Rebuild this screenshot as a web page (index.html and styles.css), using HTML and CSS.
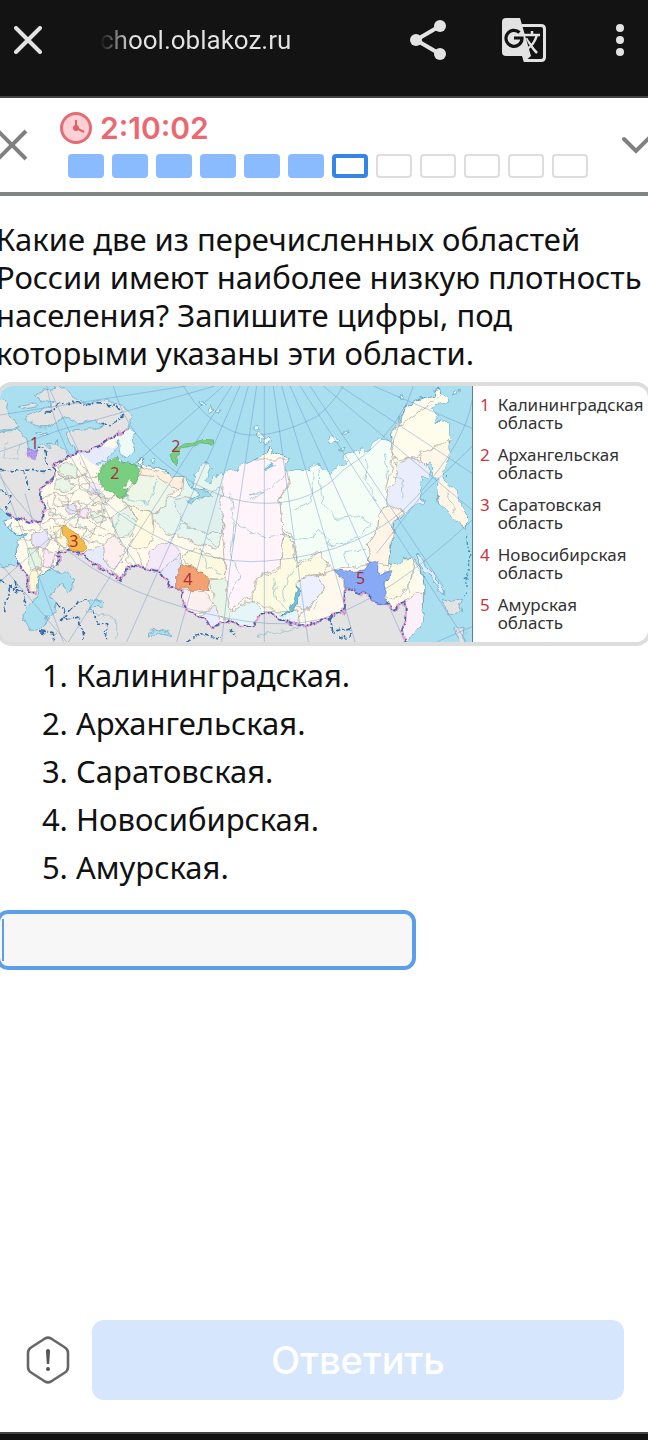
FILE: index.html
```
<!DOCTYPE html>
<html lang="ru">
<head>
  <meta charset="utf-8">
  <meta name="viewport" content="width=device-width, initial-scale=1">
  <title>school.oblakoz.ru</title>
  <link rel="stylesheet" href="styles.css">
</head>
<body>

  <header class="browser-bar">
    <button class="icon-btn" aria-label="Закрыть вкладку">
      <svg width="28" height="28" viewBox="0 0 28 28"><path d="M2 2L26 26M26 2L2 26" stroke="#e3e3e3" stroke-width="4" stroke-linecap="round"/></svg>
    </button>
    <span class="url">chool.oblakoz.ru</span>
    <button class="icon-btn share" aria-label="Поделиться">
      <svg width="36" height="40" viewBox="0 0 36 40"><path d="M30 6L6 20L30 34" fill="none" stroke="#e3e3e3" stroke-width="4"/><g fill="#e3e3e3"><circle cx="30" cy="6" r="6"/><circle cx="6" cy="20" r="6"/><circle cx="30" cy="34" r="6"/></g></svg>
    </button>
    <button class="icon-btn translate" aria-label="Перевести">
      <svg width="44" height="44" viewBox="0 0 44 44">
        <path d="M20 7.500H39Q42.500 7.500 42.500 11V39Q42.500 42.500 39 42.500H23L21 36" fill="none" stroke="#e3e3e3" stroke-width="3"/>
        <path d="M4 0H18L29 38H4Q0 38 0 34V4Q0 0 4 0Z" fill="#e3e3e3"/>
        <path d="M21 38H29L22 44Z" fill="#e3e3e3"/>
        <path d="M17.500 14.500A8 8 0 1 0 20 20H12" fill="none" stroke="#131313" stroke-width="3.200"/>
        <path d="M22 17H38M30 13V17M35 17Q32 27 25 31M25 20Q29 29 35 35" fill="none" stroke="#e3e3e3" stroke-width="2.500"/>
        <path d="M25 19H32Q31 23 29 25Q26 22 25 19Z" fill="#131313"/>
      </svg>
    </button>
    <button class="icon-btn" aria-label="Меню">
      <svg width="8" height="32" viewBox="0 0 8 32" fill="#e3e3e3"><circle cx="4" cy="4" r="4"/><circle cx="4" cy="16" r="4"/><circle cx="4" cy="28" r="4"/></svg>
    </button>
  </header>

  <div class="test-bar">
    <button class="icon-btn" aria-label="Выйти из теста">
      <svg width="28" height="32" viewBox="0 0 28 32"><path d="M-2 2L26 30M26 2L-2 30" stroke="#808080" stroke-width="4"/></svg>
    </button>
    <div class="progress">
      <div class="timer">
        <svg width="32" height="32" viewBox="0 0 32 32"><circle cx="16" cy="16" r="14.500" fill="#fcd0d4" stroke="#e56b74" stroke-width="3"/><path d="M16 8V16L24 20" fill="none" stroke="#e0606b" stroke-width="2"/><circle cx="16" cy="16" r="3" fill="#e0606b"/></svg>
        <span>2:10:02</span>
      </div>
      <div class="steps">
        <i class="step done"></i><i class="step done"></i><i class="step done"></i><i class="step done"></i><i class="step done"></i><i class="step done"></i><i class="step current"></i><i class="step"></i><i class="step"></i><i class="step"></i><i class="step"></i><i class="step"></i>
      </div>
    </div>
    <button class="icon-btn" aria-label="Развернуть">
      <svg width="26" height="20" viewBox="0 0 26 20"><path d="M2 4L14 16L28 2" fill="none" stroke="#808080" stroke-width="4" stroke-linecap="round"/></svg>
    </button>
  </div>

  <main class="task">
    <p class="question" id="question">Какие две из перечисленных областей<br>России имеют наиболее низкую плотность<br>населения? Запишите цифры, под<br>которыми указаны эти области.</p>

    <figure class="map-card">
      <svg class="map" viewBox="0 18 1416 768" preserveAspectRatio="none" role="img" aria-label="Карта России">
        <defs>
          <path id="russia" d="M205 228L235 215 262 212 300 195 345 170 385 145 396 160 402 190 398 220 380 232 362 222 357 200 358 178 345 185 350 205 335 225 310 240 285 250 296 258 318 240 335 240 350 230 370 246 385 242 400 252 414 262 424 264 412 245 420 232 434 238 428 250 440 260 470 262 500 275 515 290 550 290 560 300 574 332 582 300 586 280 600 262 615 255 622 250 630 262 625 280 615 300 630 310 642 285 652 298 660 275 668 290 680 272 715 270 722 258 765 240 785 230 805 205 818 216 840 225 865 235 855 260 865 275 880 270 930 270 935 255 960 258 972 268 985 285 1000 265 1035 255 1040 240 1030 225 1065 210 1075 225 1085 205 1095 220 1120 190 1140 178 1170 185 1180 150 1200 130 1200 110 1215 85 1250 60 1300 45 1302 28 1322 25 1325 42 1345 55 1330 70 1310 72 1295 90 1310 105 1310 125 1350 130 1352 180 1345 200 1352 225 1330 260 1320 275 1330 300 1350 320 1380 350 1385 380 1402 410 1402 445 1380 430 1345 395 1315 370 1312 330 1315 300 1300 280 1295 245 1280 250 1290 275 1288 300 1265 290 1260 320 1265 350 1270 365 1230 380 1210 400 1185 425 1180 470 1170 520 1165 548 1190 545 1200 555 1210 535 1235 535 1260 560 1272 610 1270 680 1260 740 1235 768 1215 780 1205 750 1215 735 1218 665 1180 690 1160 670 1115 660 1070 628 1035 635 1030 700 980 715 925 740 870 730 810 700 780 705 760 735 725 738 690 722 635 738 600 710 560 690 540 625 510 620 480 575 400 555 360 600 320 575 280 555 255 520 205 512 175 520 175 555 145 570 115 590 108 635 85 635 82 590 50 550 48 480 84 462 50 460 20 440 10 424 34 416 24 400 90 430 125 425 130 380 120 330 160 290 160 260Z"/>
          <clipPath id="land"><use href="#russia"/></clipPath>
          <!-- makes coasts and region borders uneven -->
          <filter id="rough" filterUnits="userSpaceOnUse" x="-20" y="0" width="1460" height="810" color-interpolation-filters="sRGB">
            <feTurbulence type="fractalNoise" baseFrequency=".035" numOctaves="2" seed="4"/>
            <feDisplacementMap in="SourceGraphic" scale="24" xChannelSelector="R" yChannelSelector="G"/>
          </filter>
        </defs>
        <rect y="18" width="1416" height="768" fill="#aadff0"/>

        <g filter="url(#rough)">
        <!-- neighbouring countries -->
        <g fill="#e3e3e3" stroke="#5aa0c0" stroke-width="2">
          <path d="M-20 50L15 68 22 95 45 122 60 140 -20 155Z"/>
          <path d="M-20 165L20 150 50 148 78 172 88 215 100 220 120 205 108 190 130 195 150 205 145 190 175 195 200 215 205 232 160 290 120 335 130 380 125 430 90 432 20 400 -20 370Z"/>
          <path d="M110 45L135 30 190 20 222 55 260 70 320 60 370 80 396 112 385 150 330 180 290 200 240 215 215 200 200 160 225 148 270 150 310 138 285 122 230 125 200 112 140 140 110 140 82 120 75 105 130 90 160 65 120 60Z"/>
          <path d="M55 78L100 68 108 80 70 88Z"/>
          <path d="M-20 560L50 560 90 500 260 500 500 560 1190 600 1218 700 1216 808 -20 808Z"/>
          <path d="M1330 658L1350 665 1388 655 1380 680 1385 698 1358 705 1340 698Z"/>
          <path d="M1365 745L1392 742 1398 806 1385 806Z"/>
        </g>
        <g fill="#aadff0" stroke="#5aa0c0" stroke-width="2">
          <path d="M115 590L145 570 205 578 222 600 218 630 200 638 190 615 165 625 150 650 168 670 165 695 145 705 130 740 110 755 88 745 72 715 75 680 105 660 115 630Z"/>
          <path d="M260 670L290 658 312 662 308 680 290 670 270 690Z"/>
          <path d="M445 765L460 742 520 765 515 770 465 755 450 775Z"/>
        </g>

        <use href="#russia" fill="#fefbec" stroke="#5aa0c0" stroke-width="3"/>
        <g clip-path="url(#land)" stroke="#a79f98" stroke-width="2" stroke-linejoin="round">
          <path fill="#e6ebfb" stroke="none" d="M210 200H360V235L290 260 260 235Z"/>
          <path fill="#eefaf6" stroke="none" d="M355 140H405V240H355Z"/>
          <path fill="#eef6e8" d="M420 280L470 275 548 322 500 350 505 375 460 400 420 390 380 380 360 350 385 340Z"/>
          <path fill="#fdf0dc" d="M415 264L550 290 548 325 520 325 470 290 420 285Z"/>
          <path fill="#e6f5ee" d="M550 270L690 240 672 300 665 390 675 450 650 505 590 490 500 460 462 430 460 400 500 380 502 355 545 340Z"/>
          <path fill="#dff1ef" d="M555 350L600 360 668 320 668 460 620 460 555 430 525 380 530 355Z"/>
          <path fill="#fefadf" d="M380 380L420 390 455 400 462 480 410 510 385 500 400 460 375 440Z"/>
          <path fill="#e7f5e9" d="M335 415L380 380 420 420 385 470 350 475Z"/>
          <path fill="#fcefed" d="M310 495L345 465 380 510 355 525 365 550 340 565 315 550Z"/>
          <path fill="#e5ebfb" d="M255 515L310 495 315 550 360 600 300 580Z"/>
          <path fill="#f3e9f8" d="M445 510L510 485 545 520 500 560 475 580 440 560Z"/>
          <path fill="#e9e8fa" d="M500 560L545 520 545 580 530 620 500 620 475 585Z"/>
          <path fill="#fdf9df" d="M555 530L580 500 670 540 675 600 630 595 560 550Z"/>
          <path fill="#e8f5e6" d="M630 600L675 595 710 640 690 720 650 700 640 660Z"/>
          <path fill="#fbf0ef" d="M545 630L610 635 640 670 620 695 560 700Z"/>
          <path fill="#e9edfd" d="M600 705L650 680 665 740 620 745Z"/>
          <path fill="#fef4fa" d="M672 240H870V300L840 360 845 440 850 460 840 560 770 590 750 650 690 690 675 600 670 500 675 440 662 380Z"/>
          <path fill="#f5fef6" d="M862 265L1170 160 1180 235 1160 330 1165 375 1135 400 1130 450 1105 490 1110 550 1000 570 950 515 895 550 880 480 845 440 840 360 870 310Z"/>
          <path fill="#fdfae2" d="M850 460L880 490 890 560 960 515 985 560 970 580 900 600 890 670 870 710 750 660 775 590 840 570 842 520Z"/>
          <path fill="#e6f6f8" d="M690 700L750 660 800 700 890 690 900 730 860 760 690 760Z"/>
          <path fill="#edf0fe" d="M895 600L955 585 975 620 950 660 910 690 890 680Z"/>
          <path fill="#fef9ec" d="M955 585L1000 570 1030 600 1040 640 1030 720 900 740 895 705 950 660 975 625Z"/>
          <path fill="#fef5e6" d="M1135 400L1175 370 1215 385 1180 430 1165 560 1110 550 1105 490 1130 450Z"/>
          <path fill="#e9edfc" d="M1185 250L1230 235 1255 235 1290 265 1290 300 1270 370 1215 400 1165 375 1160 340 1195 290Z"/>
          <path fill="#fefceb" d="M1170 160L1360 15 1360 180 1300 210 1250 230 1190 240 1175 210 1185 185Z"/>
          <path fill="#fef7e7" d="M1255 215L1300 205 1345 180 1410 450 1320 390 1300 280 1280 260Z"/>
          <path fill="#fbfae3" d="M1165 585L1180 540 1240 535 1230 620 1180 660 1150 640Z"/>
          <path fill="#fef0fa" d="M1218 665L1250 640 1270 640 1270 780 1200 780Z"/>
          <!-- central regions -->
          <path fill="#e5f5e6" d="M170 260L210 245 235 270 230 290 180 285Z"/>
          <path fill="#e9f5e9" d="M165 300L205 290 225 320 200 335 165 325Z"/>
          <path fill="#fdf2df" d="M270 340L315 350 325 375 280 370Z"/>
          <path fill="#e6e6fb" d="M190 375L225 370 235 395 205 400Z"/>
          <path fill="#f8e6f4" d="M235 385L275 390 265 415 230 410Z"/>
          <path fill="#e9e5fa" d="M95 465L140 450 150 480 130 510 95 495Z"/>
          <path fill="#fde9f5" d="M125 510L170 515 160 565 130 560Z"/>
          <path fill="#e4f5e4" d="M80 510L110 500 125 560 95 575Z"/>
          <path fill="#fef8d6" d="M165 440L190 435 205 500 175 515Z"/>
          <path fill="#fbeaf6" d="M270 305L310 315 300 340 265 335Z"/>
          <path fill="#e6f5e7" d="M275 400L310 390 320 420 290 430Z"/>
          <path fill="#fef7d6" d="M88 590L120 565 112 635 90 635Z"/>
          <path fill="none" d="M160 265L195 300 240 285 290 290M240 285L235 330 275 330 300 355 340 350M125 350L165 340 200 345 235 330M165 340L160 375 195 380 235 365 260 375 300 378 340 350M130 390L165 385 160 420 200 420 230 405 270 415 300 400 335 415M130 425L160 420 185 445M125 430L110 460 50 440M140 355L150 410 185 400 190 430M200 345L205 385 240 395M235 365L240 400 230 435 265 455 300 440 335 455M210 435L260 440 250 480 310 490M260 375L265 415 290 440 270 475M175 350L185 370 210 360 220 335M300 378L310 410 300 440M150 480L180 470 185 440M50 480L95 480M150 440L160 480 200 510M265 455L300 470 345 465M240 320L270 305 250 270 240 240M335 350L360 345 385 380M410 510L430 560M385 500L380 540 410 555"/>
        </g>

        <!-- rivers -->
        <g fill="none" stroke="#87bccb" stroke-width="2">
          <path d="M190 290L240 320 300 335 330 360M150 400L230 420 270 460 240 500M340 440L370 400 410 425 395 450 355 480M400 290L380 350 440 370 460 340 470 300M515 480L540 430 600 450 650 500M600 500L620 560 660 580M520 540L560 560 610 590M690 340L700 420 720 440 790 470 860 465M790 340L750 345 800 330 860 280M750 360L790 340M700 430L690 520 720 590 690 650M960 270L965 370 1010 415 1080 410 1110 430 1080 470 1000 500 960 450 920 480 850 470M880 390L930 365 940 280M1040 560L1035 515 1100 505M1100 230L1095 300 1130 360M1150 220L1165 300M1180 290L1210 300 1205 355M820 590L830 660 860 690M880 570L850 620 855 670M940 690L960 660M1340 330L1365 400M1240 560L1225 640M260 690L350 720 350 780M770 770L900 740M20 190L10 235 50 245 60 190"/>
        </g>
        <path d="M575 325L625 330 635 350 605 352 575 372 562 366 600 345Z" fill="#9fdbe9" stroke="#5aa0c0" stroke-width="2"/>
        <path d="M845 705L870 690 885 650 896 615 900 640 890 675 865 702Z" fill="#72c1d4" stroke="#408fa8" stroke-width="2"/>
        <path d="M790 265L820 248 828 258 800 270Z" fill="#7cc5dc"/>

        <!-- islands -->
        <g fill="#f5fbf2" stroke="#4a9fc0" stroke-width="2">
          <path d="M755 145L775 135 782 148 765 155ZM768 165L780 158 795 172 785 182ZM795 180L810 170 818 185 800 195ZM980 185L1000 165 1020 178 995 195ZM1025 160L1045 155 1048 163 1030 166ZM1015 210L1035 205 1030 215ZM1200 45L1210 40 1212 60 1203 62ZM455 240L468 235 470 248 460 250ZM597 68L610 65 612 80 600 78ZM625 75L645 90 632 98ZM650 95L662 90 660 102 652 103ZM1362 35L1378 28 1375 40 1364 48Z"/>
          <path fill="#e3eafa" d="M1245 522L1260 525 1290 570 1305 585 1312 610 1330 628 1330 640 1315 630 1290 590 1262 555Z"/>
          <path fill="#e3e3e3" d="M110 155L130 158 140 152 142 160 120 165ZM165 190L172 178 175 195ZM20 440L35 430 35 450Z"/>
        </g>
        <path d="M1395 590Q1410 620 1390 645M1398 470Q1414 530 1400 600M1336 290L1342 278" fill="none" stroke="#4494b6" stroke-width="4" stroke-dasharray="8 6"/>
        </g>

        <!-- meridians and parallels -->
        <g fill="none" stroke="#668fc4" stroke-opacity=".65" stroke-width="2">
          <path d="M720 18L380 786M695 18L205 786M670 18L0 605M645 18L180 150 0 215M560 18L0 105M745 18L530 786M770 18L690 560 665 786M793 18V786M820 18L925 786M845 18L1065 786M870 18L1215 786M900 18L1400 786M930 18L1330 620M970 18L1416 390M1020 18L1416 280M1120 18L1416 145M1240 18L1170 210M1416 200L1270 340 1130 520M150 30L360 480 410 555M0 550L200 786M75 340L100 430M0 280L190 786M1310 786L1416 740"/>
          <path d="M550 18Q610 120 700 155T950 110Q1000 70 1030 18M340 18Q380 170 520 270T800 370 1030 270Q1160 190 1220 70M140 18Q190 300 400 430T800 543Q1100 520 1250 350T1416 60M0 290Q180 560 480 660T950 720 1350 480 1416 360"/>
        </g>

        <g filter="url(#rough)">
        <!-- state border -->
        <g fill="none" stroke-linejoin="round">
          <g stroke="#ef9fd4" stroke-width="8">
            <path id="border-w" d="M20 400L90 430 125 425 130 380 120 330 160 290 160 260 205 228 235 215 262 212 300 195 345 170 385 145"/>
            <path id="border-s" d="M50 545L82 590 85 635 108 635M175 555L175 520 205 512 255 520 280 555 320 575 360 600 385 562 400 555 480 575 510 620 540 625 560 690 600 710 635 738 690 722 725 738 760 735 780 705 810 700 870 730 925 740 980 715 1030 700 1035 635 1070 628 1115 660 1160 670 1180 690 1218 665 1215 735 1205 750 1215 786"/>
          </g>
          <g stroke="#2e6ea6" stroke-width="5" stroke-dasharray="14 6 5 6">
            <path d="M20 400L90 430 125 425 130 380 120 330 160 290 160 260 205 228 235 215 262 212 300 195 345 170 385 145"/>
            <path d="M50 545L82 590 85 635 108 635M175 555L175 520 205 512 255 520 280 555 320 575 360 600 385 562 400 555 480 575 510 620 540 625 560 690 600 710 635 738 690 722 725 738 760 735 780 705 810 700 870 730 925 740 980 715 1030 700 1035 635 1070 628 1115 660 1160 670 1180 690 1218 665 1215 735 1205 750 1215 786"/>
            <path d="M0 268L75 270 150 275M75 270L85 330M110 205L130 205 145 255M140 95L190 70 280 70 345 75 370 110 330 130 300 135M0 330L30 350 20 400M0 600L70 640 70 680M30 620L10 690M45 600L55 650M185 720L215 690 235 660 265 660M165 670L190 680 200 720 240 710 250 786M280 690L290 730 320 735 320 786M120 755L160 765 170 786M560 786L600 760 630 770 665 775M990 710L1000 760 1050 740 1050 768 1010 775M690 745L710 770"/>
          </g>
        </g>

        <!-- numbered regions -->
        <g stroke="#5f9d6a" stroke-width="2">
          <path fill="#79cf80" d="M290 282L310 265 320 240 335 245 350 230 352 245 382 245 405 252 418 290 410 308 395 312 385 290 375 310 370 330 383 330 380 345 350 353 338 332 315 325 295 305Z"/>
          <path fill="#79cf80" d="M510 222L540 200 560 187 605 178 642 180 640 192 595 192 548 205 535 218 528 235 530 252 515 243Z"/>
        </g>
        <path fill="#f6ba4b" stroke="#a98543" stroke-width="2" d="M185 440L200 435 215 455 238 465 258 500 250 512 210 514 205 480 188 460Z"/>
        <path fill="#f3a072" stroke="#aa725a" stroke-width="2" d="M545 555L580 565 595 580 612 580 630 602 625 632 595 628 580 635 560 625 530 625 530 575Z"/>
        <path fill="#88aaf6" stroke="#5b78bb" stroke-width="2" d="M1003 570L1060 575 1090 570 1105 552 1132 545 1130 570 1145 580 1175 572 1155 610 1155 650 1165 672 1120 662 1070 625 1040 630 1035 600Z"/>
        <path fill="#b398f0" stroke="#9470d0" stroke-width="2" d="M82 205L95 212 112 215 100 240 88 235Z"/>
        </g>
        <g class="map-num">
          <text x="90" y="208">1</text>
          <text x="331" y="297">2</text>
          <text x="514" y="217">2</text>
          <text x="208" y="500">3</text>
          <text x="550" y="614">4</text>
          <text x="1068" y="612">5</text>
        </g>
      </svg>
      <figcaption class="legend">
        <div class="legend-row"><b>1</b><span>Калининградская<br>область</span></div>
        <div class="legend-row"><b>2</b><span>Архангельская<br>область</span></div>
        <div class="legend-row"><b>3</b><span>Саратовская<br>область</span></div>
        <div class="legend-row"><b>4</b><span>Новосибирская<br>область</span></div>
        <div class="legend-row"><b>5</b><span>Амурская<br>область</span></div>
      </figcaption>
    </figure>

    <ol class="options">
      <li>Калининградская.</li>
      <li>Архангельская.</li>
      <li>Саратовская.</li>
      <li>Новосибирская.</li>
      <li>Амурская.</li>
    </ol>

    <div class="answer">
      <input class="answer-input" type="text" aria-labelledby="question">
      <span class="caret"></span>
    </div>
  </main>

  <footer class="actions">
    <button class="icon-btn" aria-label="Сообщить об ошибке">
      <svg width="44" height="48" viewBox="0 0 44 48"><path d="M19 2.500Q22 .800 25 2.500L39 11.500Q42 13.500 42 17V31Q42 34.500 39 36.500L25 45.500Q22 47.200 19 45.500L5 36.500Q2 34.500 2 31V17Q2 13.500 5 11.500Z" fill="none" stroke="#666" stroke-width="2.600"/><path d="M20 15Q20 13 22 13T24 15L23.200 28H20.800Z" fill="#555"/><circle cx="22" cy="33" r="2" fill="#555"/></svg>
    </button>
    <button class="submit" disabled>Ответить</button>
  </footer>
  <div class="nav-strip"></div>

</body>
</html>
```
FILE: styles.css
```
* {
  box-sizing: border-box;
}

body {
  margin: 0;
  min-height: 100vh;
  display: flex;
  flex-direction: column;
  background: #fff;
  color: #111;
  font-family: "Noto Sans", sans-serif;
  overflow-x: hidden;
}

button {
  font: inherit;
}

svg {
  display: block;
}

.icon-btn {
  padding: 0;
  border: none;
  background: none;
  cursor: pointer;
}

.browser-bar {
  display: flex;
  align-items: center;
  height: 98px;
  padding: 0 24px 16px 14px;
  background: #131313;
  border-bottom: 2px solid #444;
}

.url {
  margin-left: 58px;
  font-family: Roboto, sans-serif;
  font-size: 26px;
  background: linear-gradient(to right, #131313, #e3e3e3 32px);
  background-clip: text;
  color: transparent;
}

.share {
  margin-left: auto;
}

.translate {
  margin: 0 70px 0 56px;
}

.browser-bar .icon-btn {
  flex: none;
}

.test-bar {
  display: flex;
  align-items: center;
  justify-content: space-between;
  height: 98px;
  border-bottom: 4px solid #808482;
}

.progress {
  flex: 1;
  margin-left: 32px;
}

.timer {
  display: flex;
  align-items: center;
  gap: 8px;
  height: 32px;
  margin-bottom: 10px;
  color: #ec6770;
  font-family: Inter, sans-serif;
  font-size: 30px;
  font-weight: 600;
}

.steps {
  display: flex;
  gap: 8px;
  margin-left: 8px;
}

.step {
  width: 36px;
  height: 24px;
  border: 2px solid #ddd;
  border-radius: 4px;
}

.step.done {
  border: none;
  background: #8abaff;
}

.step.current {
  border: 4px solid #3584e8;
}

.task {
  flex: 1;
  margin: 0 -4px;
  padding-top: 24px;
}

.question {
  margin: 0 0 10px;
  font-size: 31px;
  line-height: 38px;
  white-space: nowrap;
}

.map-card {
  display: grid;
  grid-template-columns: 473fr 175fr;
  margin: 0 0 5px;
  border: 4px solid #ddd;
  border-radius: 16px;
  overflow: hidden;
}

.map {
  width: 100%;
  height: 256px;
  border-right: 1px solid #5f7f8c;
}

.map-num {
  fill: #a82f3c;
  font-size: 48px;
}

.legend {
  min-width: 0;
  display: flex;
  flex-direction: column;
  gap: 14px;
  padding: 10px 0 0 7px;
  font-size: 17px;
  line-height: 18px;
  white-space: nowrap;
  color: #333;
}

.legend-row {
  display: flex;
  gap: 8px;
  height: 36px;
}

.legend-row b {
  color: #cc3340;
  font-weight: 400;
}

.options {
  margin: 0 0 19px;
  padding-left: 80px;
  font-size: 31px;
  line-height: 48px;
}

.answer {
  position: relative;
  width: 64%;
}

.answer-input {
  display: block;
  width: 100%;
  height: 60px;
  padding: 0 8px;
  border: 4px solid #5c9eeb;
  border-radius: 12px;
  outline: none;
  background: #f7f7f7;
  font: inherit;
  font-size: 31px;
}

.caret {
  position: absolute;
  left: 6px;
  top: 9px;
  width: 2px;
  height: 42px;
  background: #5c9eeb;
}

.actions {
  display: flex;
  align-items: center;
  gap: 22px;
  padding: 24px 24px 32px 26px;
}

.submit {
  flex: 1;
  height: 80px;
  border: none;
  border-radius: 12px;
  background: #d6e6fc;
  color: #fff;
  font-family: Inter, sans-serif;
  font-size: 38px;
  font-weight: 500;
}

.nav-strip {
  height: 8px;
  background: #131313;
  border-top: 2px solid #444;
}
```
